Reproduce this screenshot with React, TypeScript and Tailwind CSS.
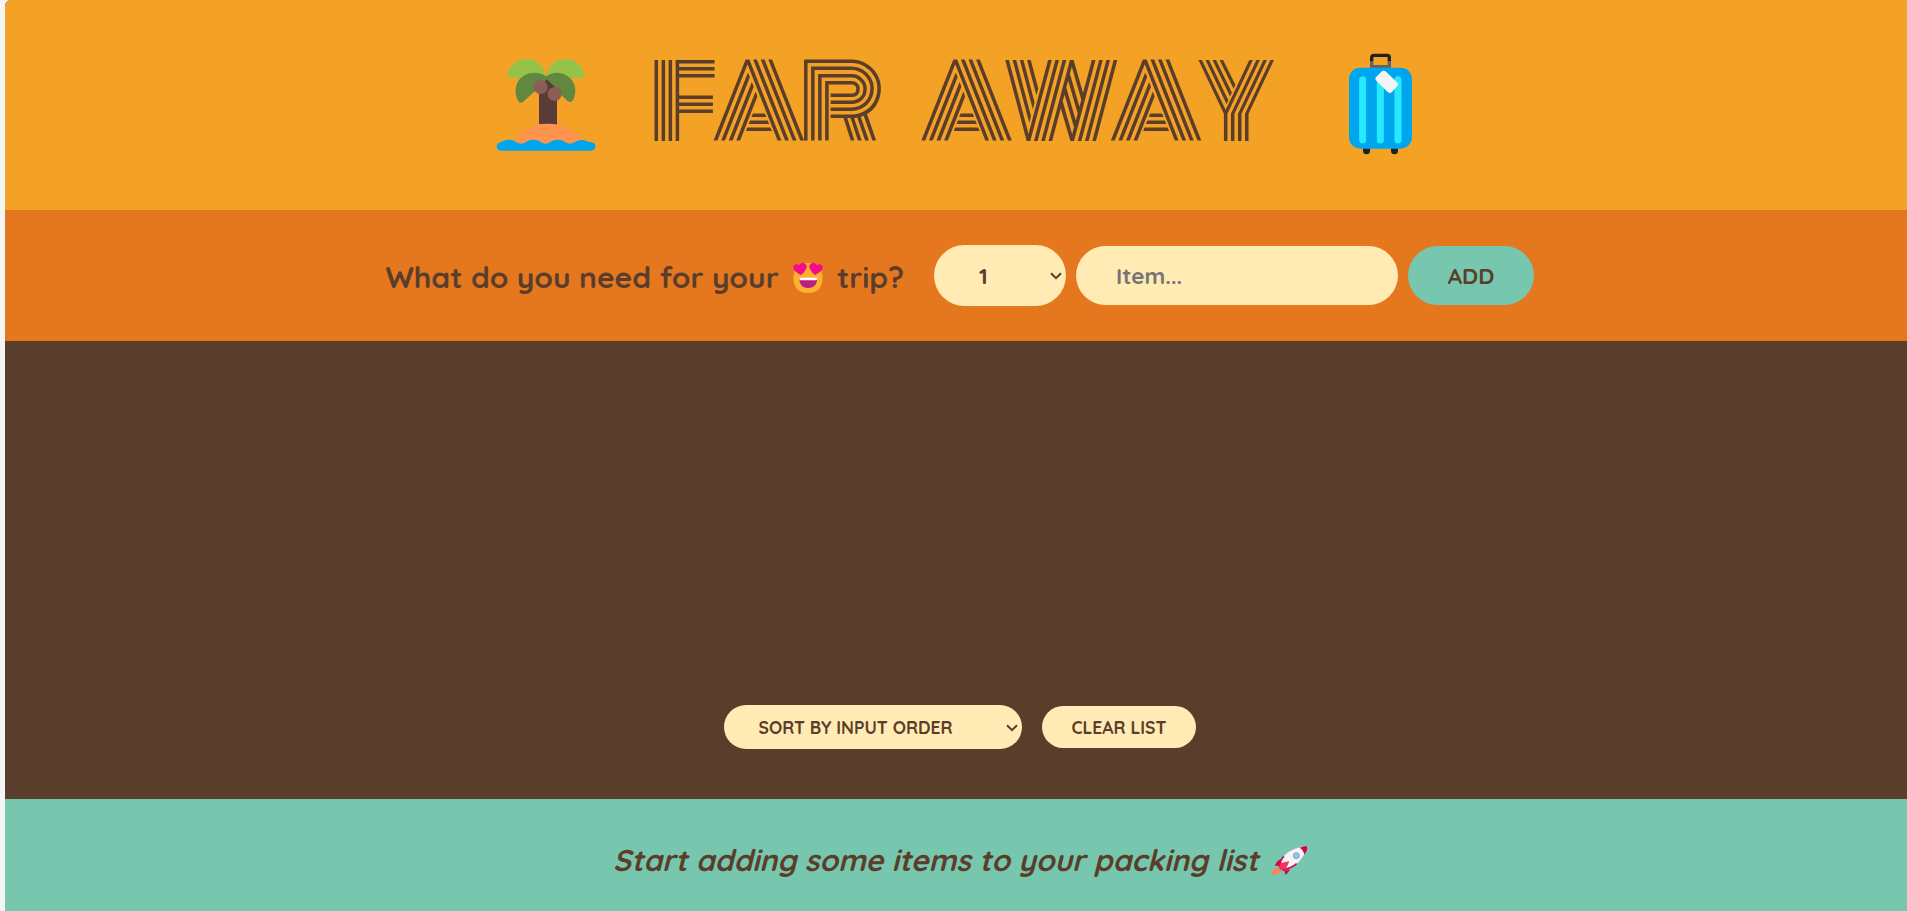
import React from "react";

const Island = () => (
  <svg viewBox="0 0 390 360" className="h-[120px] w-[130px] shrink-0">
    <path d="M198 112C193 79 170 57 140 57C109 57 83 80 83 108Q83 114 89 114H198Z" fill="#95c34a" />
    <path d="M198 112C203 79 226 57 255 57C286 57 312 80 312 108Q312 114 306 114H198Z" fill="#95c34a" />
    <path d="M177 252V140L200 118L231 146V254Z" fill="#593b38" />
    <path d="M200 110C181 95 151 94 130 108C105 123 101 158 114 182Q122 194 131 184L200 122Z" fill="#618740" />
    <path d="M197 110C216 95 242 94 262 108C288 124 292 158 279 181Q271 191 262 182L197 121Z" fill="#618740" />
    <path d="M200 118L231 146L226 160L190 130Z" fill="#593b38" />
    <circle cx="182" cy="141" r="21" fill="#8c5d54" />
    <circle cx="224" cy="162" r="21" fill="#8c5d54" />
    <path d="M97 306C148 234 260 233 315 306L250 322H150Z" fill="#ff944d" />
    <path d="M62 307C77 297 98 297 109 307Q123 315 137 307C151 297 170 297 183 307Q197 315 210 307C224 297 244 297 256 307Q270 315 284 307C298 297 312 299 323 305L334 306Q346 309 346 319Q346 332 333 332H64Q50 332 50 319Q50 309 62 307Z" fill="#00a6ed" />
  </svg>
);

const Suitcase = () => (
  <svg viewBox="0 0 300 360" className="h-[120px] w-[100px] shrink-0">
    <path d="M125 82V60M178 82V60M120 80H183" fill="none" stroke="#636363" strokeWidth="10" />
    <path d="M125 63V53Q125 46 132 46H171Q178 46 178 53V63" fill="none" stroke="#212121" strokeWidth="10" />
    <path d="M99 322H120V332A10.500 10.500 0 0 1 99 332ZM183 322H204V332A10.500 10.500 0 0 1 183 332Z" fill="#212121" />
    <rect x="57" y="83" width="189" height="243" rx="34" fill="#00a6ed" />
    <path d="M98 119V300M151 119V300M204 119V300" stroke="#26eafc" strokeWidth="21" strokeLinecap="round" />
    <path d="M154 95Q161 89 168 95L201 127Q207 133 201 139L186 156Q180 162 173 156L139 122Q133 116 139 110Z" fill="#f4f4f4" />
  </svg>
);

const HeartEyes = () => (
  <svg viewBox="0 0 30 30" className="mt-px h-[30px] w-[30px] shrink-0">
    <path d="M15 0C26 0 29.500 7 29.500 15C29.500 24 25 30 15 30S.5 24 .5 15C.5 7 4 0 15 0Z" fill="#ffb02e" />
    <path d="M7.700 12C3 9 .3 7.300.3 4.200C.3 1.300 3.700.1 6 2.200C7.800-.5 11-.3 12.800 1.200C14.800 3.200 13.500 5.500 12 7.700C10.800 9.400 9.600 11 7.700 12Z" fill="#f70a8d" />
    <path d="M22.300 12C27 9 29.700 7.300 29.700 4.200C29.700 1.300 26.300.1 24 2.200C22.200-.5 19-.3 17.200 1.200C15.200 3.200 16.500 5.500 18 7.700C19.200 9.400 20.400 11 22.300 12Z" fill="#f70a8d" />
    <path d="M6.500 15H24C24.500 21 21 25 15 25S6 21 6.500 15Z" fill="#bb1d80" />
    <path d="M6.500 14.800H24V16C24 17 23.500 17.300 22.500 17.300H8C7 17.300 6.500 17 6.500 16Z" fill="#fff" />
  </svg>
);

const Rocket = () => (
  <svg viewBox="0 0 180 150" className="h-[50px] w-[60px] shrink-0">
    <path d="M72 97C57 99 51 108 49 119C62 119 75 117 81 105Z" fill="#ff8257" />
    <path d="M78 73C66 77 62 86 60 93L78 91ZM105 99C104 108 98 115 92 120L87 105Z" fill="#ca0b4a" />
    <path d="M69 91L75 101L86 109L90 105L75 88Z" fill="#533566" />
    <path d="M76 96C70 67 104 38 154 33C162 34 154 52 146 62C129 87 109 105 83 105Z" fill="#f4f4f4" stroke="#b4ace0" strokeWidth="2" />
    <path d="M134 38Q145 33 154 33Q160 38 154 50L148 59Q145 45 134 38Z" fill="#ca0b4a" />
    <path d="M76 96Q72 77 87 64M83 104Q110 100 125 86" fill="none" stroke="#ca0b4a" strokeWidth="5" />
    <path d="M72 97L78 84L103 79L94 99L82 105Z" fill="#f92f60" />
    <circle cx="124" cy="62" r="9" fill="#83cbff" stroke="#9b9b9b" strokeWidth="3" />
  </svg>
);

const Chevron = ({ className }: { className: string }) => (
  <svg viewBox="0 0 12 8" className={"pointer-events-none absolute h-[8px] w-[12px] " + className}>
    <path d="M1 1.200L6 6.200L11 1.200" fill="none" stroke="#5a3e2b" strokeWidth="2" />
  </svg>
);

export default function App() {
  return (
    <div className="h-[911px] w-full overflow-hidden bg-[#f4f5f5] pl-[5px] font-['Quicksand','Lato',sans-serif] font-bold text-[#5a3e2b]">
      <div className="flex h-full flex-col overflow-hidden rounded-tl-[6px] bg-[#5a3e2b]">
        <header className="flex h-[210px] shrink-0 items-start bg-[#f4a226] pt-[40px] pl-[475px]">
          <Island />
          <h1 className="ml-[40px] flex h-[126px] w-[680px] shrink-0 items-center font-['Monoton','Roboto',sans-serif] text-[100px] font-normal tracking-[-6.25px] whitespace-nowrap [word-spacing:37.5px]">
            FAR AWAY
          </h1>
          <Suitcase />
        </header>

        <form className="flex h-[131px] shrink-0 items-center bg-[#e5771f] pl-[380.5px]">
          <h3 className="flex w-[548.5px] shrink-0 items-center pt-[4px] text-[30px] whitespace-nowrap">
            <span className="w-[407.5px]">What do you need for your</span>
            <HeartEyes />
            <span className="ml-[14px]">trip?</span>
          </h3>
          <div className="relative h-[61px] w-[132px]">
            <select className="h-full w-full appearance-none rounded-full bg-[#ffebb3] pl-[45px] text-[22.5px] outline-none">
              <option>1</option>
            </select>
            <Chevron className="top-[27px] right-[4px]" />
          </div>
          <input
            placeholder="Item..."
            className="ml-[10px] h-[59px] w-[322px] rounded-full bg-[#ffebb3] px-[40px] text-[22.5px] outline-none placeholder:text-[#757575]"
          />
          <button type="button" className="ml-[10px] h-[59px] w-[126px] rounded-full bg-[#76c7ad] text-[22.5px]">
            ADD
          </button>
        </form>

        <main className="flex h-[458px] shrink-0 items-end bg-[#5a3e2b] pb-[50px] pl-[719px]">
          <div className="relative h-[44px] w-[298px]">
            <select className="h-full w-full appearance-none rounded-full bg-[#ffebb3] pl-[34.5px] text-[17.5px] outline-none">
              <option>SORT BY INPUT ORDER</option>
            </select>
            <Chevron className="top-[19px] right-[4px]" />
          </div>
          <button type="button" className="mb-px ml-[20px] h-[42px] w-[154px] rounded-full bg-[#ffebb3] text-[17.5px]">
            CLEAR LIST
          </button>
        </main>

        <footer className="flex h-[112px] shrink-0 items-center bg-[#76c7ad] pt-[9px] pl-[608px] text-[30px]">
          <em className="w-[642px] pt-px whitespace-nowrap italic">Start adding some items to your packing list</em>
          <Rocket />
        </footer>
      </div>
    </div>
  );
}
